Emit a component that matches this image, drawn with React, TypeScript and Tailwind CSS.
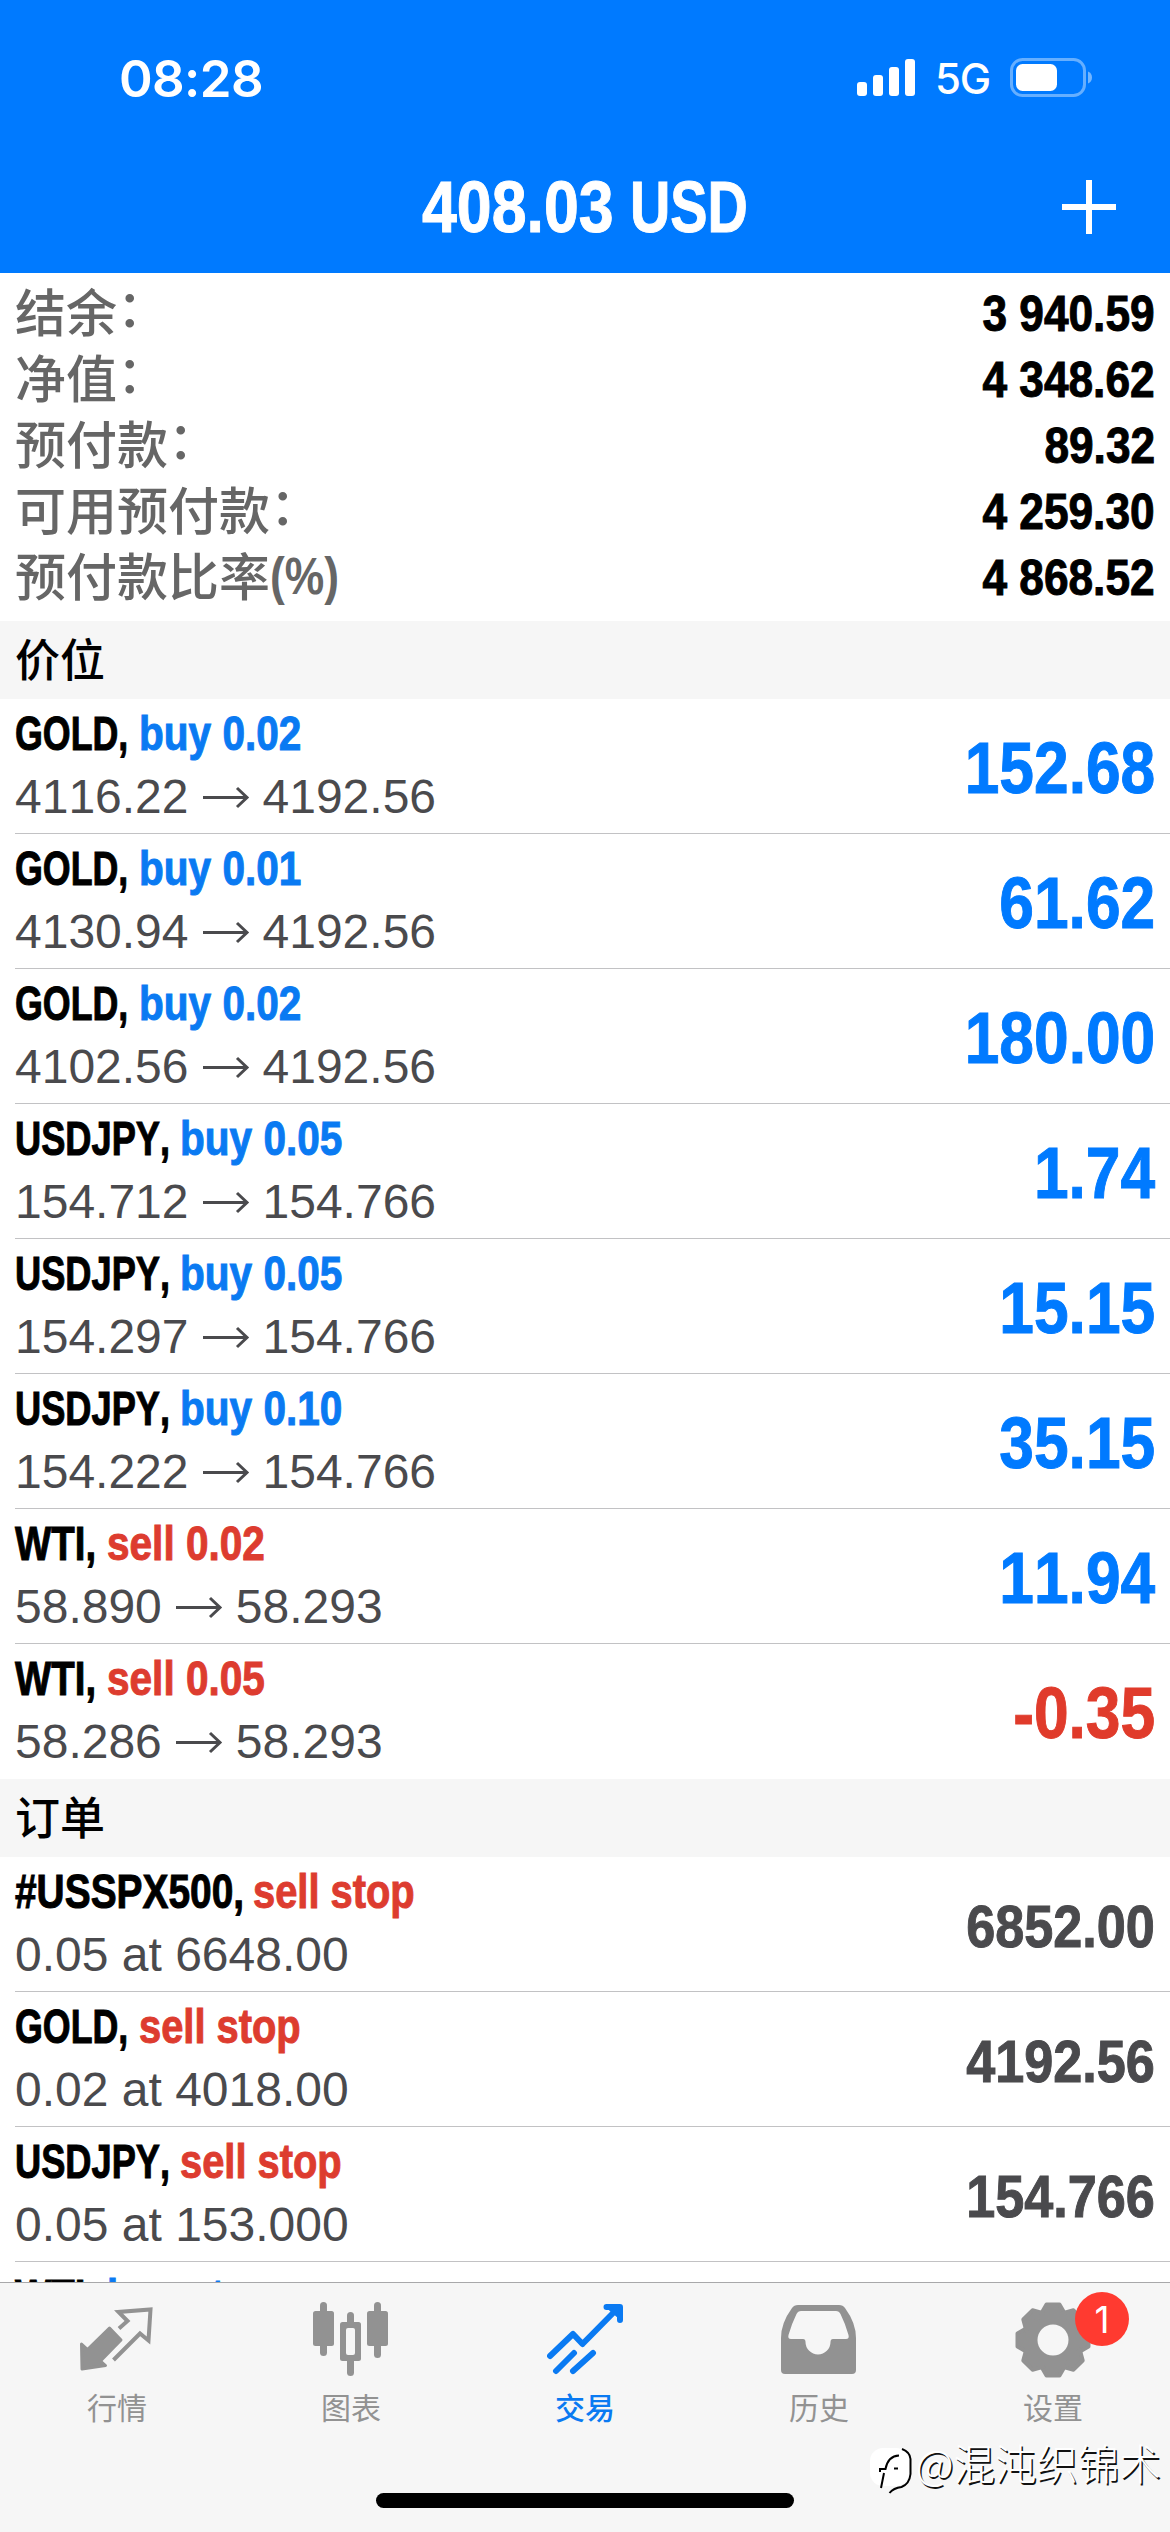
import type { ReactNode } from 'react';
import { clsx } from 'clsx';

// Condensed look: bold Helvetica-like face squeezed horizontally
const condensed = 'block whitespace-nowrap font-bold [font-kerning:none] [-webkit-text-stroke:1px]';

const summary = [
  { label: '结余', suffix: '：', value: '3 940.59' },
  { label: '净值', suffix: '：', value: '4 348.62' },
  { label: '预付款', suffix: '：', value: '89.32' },
  { label: '可用预付款', suffix: '：', value: '4 259.30' },
  { label: '预付款比率', suffix: '(%)', value: '4 868.52' },
];

const symbols: Record<string, string> = {
  GOLD: 'w-[124px] scale-x-[0.745]',
  USDJPY: 'w-[165px] scale-x-[0.755]',
  WTI: 'w-[92px] scale-x-[0.8]',
  '#USSPX500': 'w-[238px] scale-x-[0.81]',
};

const positions = [
  { symbol: 'GOLD', side: 'buy', lots: '0.02', open: '4116.22', last: '4192.56', profit: '152.68' },
  { symbol: 'GOLD', side: 'buy', lots: '0.01', open: '4130.94', last: '4192.56', profit: '61.62' },
  { symbol: 'GOLD', side: 'buy', lots: '0.02', open: '4102.56', last: '4192.56', profit: '180.00' },
  { symbol: 'USDJPY', side: 'buy', lots: '0.05', open: '154.712', last: '154.766', profit: '1.74' },
  { symbol: 'USDJPY', side: 'buy', lots: '0.05', open: '154.297', last: '154.766', profit: '15.15' },
  { symbol: 'USDJPY', side: 'buy', lots: '0.10', open: '154.222', last: '154.766', profit: '35.15' },
  { symbol: 'WTI', side: 'sell', lots: '0.02', open: '58.890', last: '58.293', profit: '11.94' },
  { symbol: 'WTI', side: 'sell', lots: '0.05', open: '58.286', last: '58.293', profit: '-0.35' },
];

const orders = [
  { symbol: '#USSPX500', side: 'sell stop', detail: '0.05 at 6648.00', price: '6852.00' },
  { symbol: 'GOLD', side: 'sell stop', detail: '0.02 at 4018.00', price: '4192.56' },
  { symbol: 'USDJPY', side: 'sell stop', detail: '0.05 at 153.000', price: '154.766' },
  { symbol: 'WTI', side: 'buy stop', detail: '', price: '' },
];

function StatusBar() {
  return (
    <div className="flex h-[156px] items-center justify-between pl-[119px] pr-[78px]">
      <span className="font-['Inter',sans-serif] text-[51px] font-semibold leading-none tracking-[-0.6px]">08:28</span>
      <div className="flex items-center gap-[20px]">
        <svg width="58" height="38" viewBox="0 0 58 38" fill="white">
          <rect x="0" y="23" width="10" height="14" rx="3" />
          <rect x="16" y="16" width="10" height="21" rx="3" />
          <rect x="32" y="8" width="10" height="29" rx="3" />
          <rect x="48" y="0" width="10" height="37" rx="3" />
        </svg>
        <span className="pt-[2px] font-['Inter',sans-serif] text-[42px] font-medium leading-none tracking-[-1.2px]">5G</span>
        <svg width="82" height="40" viewBox="0 0 82 40" fill="none">
          <rect x="1.5" y="1.5" width="73" height="36" rx="11" stroke="white" strokeOpacity="0.4" strokeWidth="3" />
          <rect x="6" y="6" width="41" height="27" rx="6.5" fill="white" />
          <path d="M78 13.5c2.6 1 4 3.3 4 6s-1.4 5-4 6z" fill="white" fillOpacity="0.45" />
        </svg>
      </div>
    </div>
  );
}

function Header() {
  return (
    <header className="h-[273px] shrink-0 bg-[#007aff] text-white">
      <StatusBar />
      <div className="grid h-[102px] grid-cols-[1fr_auto_1fr] items-center">
        <span />
        <h1 className="flex text-[72px] leading-[102px]">
          <span className={clsx(condensed, 'w-[208px] origin-left scale-x-[0.87]')}>408.03</span>
          <span className={clsx(condensed, 'w-[119px] origin-left scale-x-[0.775]')}>USD</span>
        </h1>
        <svg className="mr-[53px] justify-self-end" width="56" height="56" viewBox="0 0 56 56">
          <path d="M28 1v54M1 28h54" stroke="white" strokeWidth="6" />
        </svg>
      </div>
    </header>
  );
}

function Summary() {
  return (
    <section className="flex h-[348px] shrink-0 flex-col px-[15px] pt-[7px]">
      {summary.map((row) => (
        <div key={row.label} className="flex h-[66px] items-start justify-between">
          <span className="flex font-['Noto_Sans_CJK_SC',sans-serif] text-[51px] font-medium leading-[60px] text-[#666]">
            {row.label}
            {row.suffix === '(%)' ? (
              <span className="w-[70px] origin-left scale-x-[0.87] pt-[3px] font-['Liberation_Sans',sans-serif] font-bold">
                {row.suffix}
              </span>
            ) : (
              <span className="leading-[50px]">{row.suffix}</span>
            )}
          </span>
          <span className={clsx(condensed, 'origin-right scale-x-[0.885] pt-[3px] text-[50px] leading-[63px] text-black')}>
            {row.value}
          </span>
        </div>
      ))}
    </section>
  );
}

function SectionTitle({ children }: { children: ReactNode }) {
  return (
    <h2 className="h-[78px] shrink-0 bg-[#f6f6f6] px-[15px] font-['Noto_Sans_CJK_SC',sans-serif] text-[45px] font-medium leading-[74px] text-black">
      {children}
    </h2>
  );
}

type RowProps = { symbol: string; action: string; last?: boolean; value: ReactNode; children: ReactNode };

function Row({ symbol, action, last, value, children }: RowProps) {
  return (
    <div className="h-[135px] shrink-0 pl-[15px]">
      <div className={clsx('flex h-full justify-between pr-[15px]', !last && 'border-b border-[#c2c2c4]')}>
        <div className="pt-[3px] text-[48px] leading-[63px]">
          <div className="flex">
            <span className={clsx(condensed, 'origin-left text-black', symbols[symbol])}>{symbol},</span>
            <span
              className={clsx(
                condensed,
                'origin-left',
                action.endsWith('stop') ? 'scale-x-[0.83]' : 'scale-x-[0.845]',
                action.startsWith('buy') ? 'text-[#0a7af2]' : 'text-[#dd3c2f]',
              )}
            >
              {action}
            </span>
          </div>
          <div className="flex items-center gap-[13px] text-[#4a4a4d] [font-kerning:none]">{children}</div>
        </div>
        {value}
      </div>
    </div>
  );
}

function Arrow() {
  return (
    <svg width="48" height="24" viewBox="0 0 48 24" fill="none" stroke="#4a4a4d" strokeWidth="3">
      <path d="M1 12.5h44M35 3l10 9.5L35 22" />
    </svg>
  );
}

/* ── Tab bar icons ─────────────────────────────────────────── */

function QuotesIcon() {
  return (
    <svg width="76" height="76" viewBox="0 0 76 76" fill="none">
      <path
        d="M2.5 42l6 5.5L30.5 26 42 38 21.5 59l5 4.5L3 67z"
        fill="#929292"
        stroke="#929292"
        strokeWidth="3"
        strokeLinejoin="round"
      />
      <path d="M40 26.5l8.5-7.5-9-9 32-2.5-2 31-8.5-7L34.5 58" stroke="#929292" strokeWidth="4" />
    </svg>
  );
}

function ChartIcon() {
  return (
    <svg width="76" height="76" viewBox="0 0 76 76" fill="#929292">
      <rect x="7" y="0" width="7" height="54" rx="3.5" />
      <rect x="0" y="9" width="21" height="35" rx="2.5" />
      <rect x="34" y="10" width="7" height="64" rx="3.5" />
      <rect x="27" y="20" width="21" height="39" rx="2.5" />
      <rect x="33" y="26" width="9" height="27" rx="2" fill="#f6f6f6" />
      <rect x="61" y="0" width="7" height="56" rx="3.5" />
      <rect x="54" y="9" width="21" height="35" rx="2.5" />
    </svg>
  );
}

function TradeIcon() {
  return (
    <svg
      width="76"
      height="76"
      viewBox="0 0 76 76"
      fill="none"
      stroke="#0a7af2"
      strokeWidth="6"
      strokeLinecap="round"
      strokeLinejoin="round"
    >
      <path d="M3 54l23-22 9.5 10L71 6M59.5 5H73v13M64 6l8 7M9 69l18-18M26 69l20-18" />
    </svg>
  );
}

function HistoryIcon() {
  return (
    <svg width="76" height="76" viewBox="0 0 76 76" fill="#929292" fillRule="evenodd">
      <path d="M11 6q2-3 6-3h41q4 0 6 3Q75 21 75 36v32q0 4-4 4H4q-4 0-4-4V36Q0 21 11 6zM20 9q-3 0-4.5 3Q11 21 7.5 33q-1 4 2.5 4h12q2.5 0 2.5 3a12.5 12.5 0 0 0 25 0q0-3 2.5-3H65q3.5 0 2.5-4-3.5-12-8-21-1.5-3-4.5-3z" />
    </svg>
  );
}

function SettingsIcon() {
  const teeth = [0, 45, 90, 135, 180, 225, 270, 315];
  return (
    <svg width="76" height="76" viewBox="-38 -38 76 76" fill="#929292">
      <circle r="30.5" />
      {teeth.map((deg) => (
        <path
          key={deg}
          d="M-12-26l5.5-9.5h13L12-26z"
          stroke="#929292"
          strokeWidth="4"
          strokeLinejoin="round"
          transform={`rotate(${deg})`}
        />
      ))}
      <circle r="15.5" fill="#f6f6f6" />
    </svg>
  );
}

const tabs = [
  { label: '行情', icon: <QuotesIcon /> },
  { label: '图表', icon: <ChartIcon /> },
  { label: '交易', icon: <TradeIcon />, active: true },
  { label: '历史', icon: <HistoryIcon /> },
  { label: '设置', icon: <SettingsIcon />, badge: 1 },
];

function TabBar() {
  return (
    <nav className="relative flex h-[250px] shrink-0 flex-col items-center border-t border-[#a8a8aa] bg-[#f6f6f6]">
      <div className="grid w-full grid-cols-5">
        {tabs.map((tab) => (
          <div key={tab.label} className="flex flex-col items-center pt-[19px]">
            <div className="relative">
              {tab.icon}
              {tab.badge && (
                <span className="absolute -right-[38px] -top-[10px] flex size-[54px] items-center justify-center rounded-full bg-[#ff3a30] font-['Inter',sans-serif] text-[37px] leading-none text-white">
                  {tab.badge}
                </span>
              )}
            </div>
            <span
              className={clsx(
                "mt-[6px] font-['Noto_Sans_CJK_SC',sans-serif] text-[30px] leading-[44px]",
                tab.active ? 'font-medium text-[#0a7af2]' : 'text-[#929292]',
              )}
            >
              {tab.label}
            </span>
          </div>
        ))}
      </div>
      <div className="mt-[65px] h-[15px] w-[418px] rounded-full bg-black" />
      <Watermark />
    </nav>
  );
}

function Watermark() {
  return (
    <div className="absolute right-[9px] top-[154px] flex items-start">
      <svg className="mt-[9px]" width="46" height="50" viewBox="0 0 46 50" fill="none">
        <rect x="0" y="2" width="39" height="38" rx="13" fill="white" />
        <path d="M32 3q8 3 8.5 10v15q-1 10-9 13-8 1-12 6" stroke="black" strokeWidth="2" />
        <path d="M10 26v-3h5.5Q18 10 29 9.5M14 27l-3 15M24 22.5h4" stroke="black" strokeWidth="2" />
      </svg>
      <span className="font-['Noto_Sans_CJK_SC',sans-serif] text-[41.5px] font-light leading-[50px] text-white [text-shadow:1.5px_1.5px_0_#111]">
        @混沌织锦术
      </span>
    </div>
  );
}

export default function App() {
  return (
    <div className="flex h-[2532px] w-[1170px] flex-col overflow-hidden bg-white font-['Liberation_Sans',sans-serif]">
      <Header />
      <main className="flex min-h-0 flex-1 flex-col overflow-hidden">
        <Summary />

        <SectionTitle>价位</SectionTitle>
        {positions.map((p, i) => (
          <Row
            key={i}
            symbol={p.symbol}
            action={`${p.side} ${p.lots}`}
            last={i === positions.length - 1}
            value={
              <span
                className={clsx(
                  condensed,
                  'origin-right scale-x-[0.865] pt-[2px] text-[72px] leading-[135px]',
                  p.profit.startsWith('-') ? 'text-[#e03b2b]' : 'text-[#007aff]',
                )}
              >
                {p.profit}
              </span>
            }
          >
            <span>{p.open}</span>
            <Arrow />
            <span>{p.last}</span>
          </Row>
        ))}

        <SectionTitle>订单</SectionTitle>
        {orders.map((o, i) => (
          <Row
            key={i}
            symbol={o.symbol}
            action={o.side}
            value={
              <span className={clsx(condensed, 'origin-right scale-x-[0.87] pt-[2px] text-[60px] leading-[135px] text-[#4a4a4d]')}>
                {o.price}
              </span>
            }
          >
            <span>{o.detail}</span>
          </Row>
        ))}
      </main>
      <TabBar />
    </div>
  );
}
